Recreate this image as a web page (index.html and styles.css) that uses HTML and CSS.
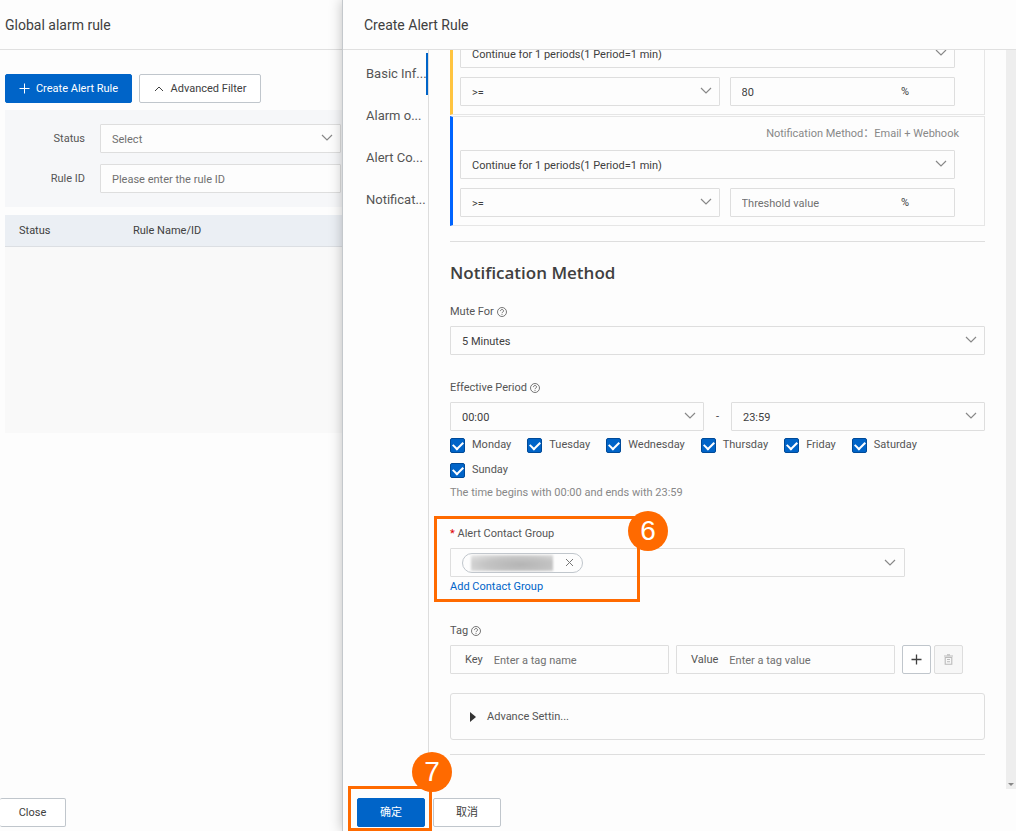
FILE: index.html
```html
<!DOCTYPE html>
<html lang="en">
<head>
    <meta charset="UTF-8">
    <meta name="viewport" content="width=device-width, initial-scale=1.0">
    <title>Create Alert Rule</title>
    <link rel="stylesheet" href="styles.css">
</head>
<body>
    <!-- Shared icons -->
    <svg width="0" height="0" class="sprite" aria-hidden="true">
        <symbol id="chevron" viewBox="0 0 12 7"><path d="M1 1l5 5 5-5" fill="none" stroke="currentColor" stroke-width="1.2"/></symbol>
        <symbol id="help" viewBox="0 0 10 10">
            <circle cx="5" cy="5" r="4.5" fill="none" stroke="currentColor" stroke-width="0.8"/>
            <path d="M3.4 4.1C3.4 2 6.6 2 6.6 4 6.6 5 5 5 5 6.2M5 7v0.9" fill="none" stroke="currentColor" stroke-width="0.8"/>
        </symbol>
    </svg>

    <div class="app">
        <main class="page">
            <header class="page-header"><h1>Global alarm rule</h1></header>
            <div class="page-body">
                <div class="toolbar">
                    <button class="btn btn-primary btn-create" type="button">
                        <svg width="11" height="11" viewBox="0 0 11 11"><path d="M5.5 0.5v10M0.5 5.5h10" stroke="currentColor" fill="none"/></svg>
                        Create Alert Rule
                    </button>
                    <button class="btn btn-filter" type="button">
                        <svg width="10" height="6" viewBox="0 0 10 6"><path d="M1 5l4-4 4 4" fill="none" stroke="currentColor"/></svg>
                        Advanced Filter
                    </button>
                </div>
                <form class="filter">
                    <label for="status">Status</label>
                    <div class="select">
                        <select id="status"><option>Select</option></select>
                        <svg class="chevron"><use href="#chevron"/></svg>
                    </div>
                    <label for="rule-id">Rule ID</label>
                    <div class="field"><input id="rule-id" type="text" placeholder="Please enter the rule ID"></div>
                </form>
                <table class="rules">
                    <thead><tr><th class="col-status">Status</th><th>Rule Name/ID</th></tr></thead>
                    <tbody><tr><td colspan="2"></td></tr></tbody>
                </table>
            </div>
            <footer class="page-footer"><button class="btn btn-close" type="button">Close</button></footer>
        </main>

        <section class="drawer">
            <header class="drawer-header"><h2>Create Alert Rule</h2></header>
            <div class="drawer-body">
                <nav class="steps">
                    <a class="active" href="#basic">Basic Inf...</a>
                    <a href="#alarm">Alarm o...</a>
                    <a href="#contact">Alert Co...</a>
                    <a href="#notification">Notificat...</a>
                </nav>

                <form class="content">
                    <div class="level level-warn">
                        <div class="select">
                            <select aria-label="Periods"><option>Continue for 1 periods(1 Period=1 min)</option></select>
                            <svg class="chevron"><use href="#chevron"/></svg>
                        </div>
                        <div class="condition">
                            <div class="select">
                                <select aria-label="Operator"><option>&gt;=</option></select>
                                <svg class="chevron"><use href="#chevron"/></svg>
                            </div>
                            <div class="field threshold"><input type="text" value="80" aria-label="Threshold"><span>%</span></div>
                        </div>
                    </div>
                    <div class="level level-info">
                        <p class="level-title">Notification Method：Email + Webhook</p>
                        <div class="select">
                            <select aria-label="Periods"><option>Continue for 1 periods(1 Period=1 min)</option></select>
                            <svg class="chevron"><use href="#chevron"/></svg>
                        </div>
                        <div class="condition">
                            <div class="select">
                                <select aria-label="Operator"><option>&gt;=</option></select>
                                <svg class="chevron"><use href="#chevron"/></svg>
                            </div>
                            <div class="field threshold"><input type="text" placeholder="Threshold value" aria-label="Threshold"><span>%</span></div>
                        </div>
                    </div>

                    <section class="notification" id="notification">
                        <h3>Notification Method</h3>

                        <div class="item">
                            <label for="mute">Mute For <svg class="help"><use href="#help"/></svg></label>
                            <div class="select">
                                <select id="mute"><option>5 Minutes</option></select>
                                <svg class="chevron"><use href="#chevron"/></svg>
                            </div>
                        </div>

                        <div class="item">
                            <label for="from">Effective Period <svg class="help"><use href="#help"/></svg></label>
                            <div class="range">
                                <div class="select">
                                    <select id="from"><option>00:00</option></select>
                                    <svg class="chevron"><use href="#chevron"/></svg>
                                </div>
                                <span>-</span>
                                <div class="select">
                                    <select aria-label="To"><option>23:59</option></select>
                                    <svg class="chevron"><use href="#chevron"/></svg>
                                </div>
                            </div>
                            <div class="days">
                                <label><input type="checkbox" checked>Monday</label>
                                <label><input type="checkbox" checked>Tuesday</label>
                                <label><input type="checkbox" checked>Wednesday</label>
                                <label><input type="checkbox" checked>Thursday</label>
                                <label><input type="checkbox" checked>Friday</label>
                                <label><input type="checkbox" checked>Saturday</label>
                                <label><input type="checkbox" checked>Sunday</label>
                            </div>
                            <p class="hint">The time begins with 00:00 and ends with 23:59</p>
                        </div>

                        <div class="item group">
                            <label for="group"><span class="required">*</span> Alert Contact Group</label>
                            <div class="field tags">
                                <span class="tag">
                                    <span class="tag-text"></span>
                                    <button type="button" aria-label="Remove"><svg width="9" height="9" viewBox="0 0 9 9"><path d="M1 1l7 7M8 1l-7 7" stroke="currentColor" fill="none"/></svg></button>
                                </span>
                                <input id="group" type="text">
                                <svg class="chevron"><use href="#chevron"/></svg>
                            </div>
                            <a class="add-group" href="#contact">Add Contact Group</a>
                            <div class="callout callout-group"><span class="badge">6</span></div>
                        </div>

                        <div class="item">
                            <label for="tag-key">Tag <svg class="help"><use href="#help"/></svg></label>
                            <div class="tag-row">
                                <div class="field"><label for="tag-key">Key</label><input id="tag-key" type="text" placeholder="Enter a tag name"></div>
                                <div class="field"><label for="tag-value">Value</label><input id="tag-value" type="text" placeholder="Enter a tag value"></div>
                                <button class="btn btn-icon" type="button" aria-label="Add"><svg width="11" height="11" viewBox="0 0 11 11"><path d="M5.5 0.5v10M0.5 5.5h10" stroke="currentColor" stroke-width="1.3" fill="none"/></svg></button>
                                <button class="btn btn-icon" type="button" aria-label="Delete" disabled><svg width="9" height="11" viewBox="0 0 9 11"><path d="M0 2h9M3 0.8h3M1.2 3.5v6.7h6.6V3.5zM3 5.5h3M3 7.8h3" stroke="currentColor" stroke-width="1.1" fill="none"/></svg></button>
                            </div>
                        </div>

                        <button class="advance" type="button">
                            <svg width="6" height="10" viewBox="0 0 6 10"><path d="M0 0l6 5-6 5z" fill="currentColor"/></svg>
                            Advance Settin...
                        </button>
                    </section>
                </form>

                <div class="scrollbar"><svg width="6" height="3" viewBox="0 0 6 3"><path d="M0 0h6L3 3z" fill="currentColor"/></svg></div>
            </div>
            <footer class="drawer-footer">
                <div class="confirm">
                    <button class="btn btn-primary" type="button">确定</button>
                    <div class="callout callout-confirm"><span class="badge">7</span></div>
                </div>
                <button class="btn" type="button">取消</button>
            </footer>
        </section>
    </div>
</body>
</html>
```
FILE: styles.css
```css
* {
    box-sizing: border-box;
}

body {
    margin: 0;
    font-family: Roboto, "Noto Sans CJK SC", sans-serif;
    font-size: 11px;
    line-height: 16px;
    color: #404040;
    background: #fdfdfd;
}

h1, h2, h3, p {
    margin: 0;
}

input, select, button {
    font: inherit;
    color: inherit;
}

a {
    color: #0064c8;
    text-decoration: none;
}

.sprite {
    position: absolute;
}

.app {
    display: flex;
    height: 100vh;
    overflow: hidden;
}

/* Buttons */
.btn {
    display: inline-flex;
    align-items: center;
    justify-content: center;
    height: 29px;
    padding: 0 22px;
    border: 1px solid #c0c6cc;
    border-radius: 2px;
    background: #fff;
}

.btn-primary {
    border-color: #0064c8;
    background: #0064c8;
    color: #fff;
}

.btn-create {
    gap: 6px;
    width: 127px;
    padding: 0;
}

.btn-filter {
    gap: 7px;
    width: 122px;
    padding: 0;
}

.btn-icon {
    width: 29px;
    padding: 0;
}

.btn-icon:disabled {
    border-color: #ddd;
    background: #f7f7f7;
    color: #bbb;
}

/* Inputs and drop-downs */
.select {
    position: relative;
}

.select select,
.field {
    width: 100%;
    height: 29px;
    border: 1px solid #dedede;
    border-radius: 1px;
    background: #fdfdfd;
}

.select select {
    display: block;
    padding: 2px 30px 0 11px;
    appearance: none;
}

.chevron {
    position: absolute;
    top: 10px;
    right: 8px;
    width: 12px;
    height: 7px;
    color: #888;
    pointer-events: none;
}

.field {
    display: flex;
    align-items: center;
    padding: 0 11px;
}

.field input {
    flex: 1;
    min-width: 0;
    padding: 2px 0 0;
    border: 0;
    outline: 0;
    background: none;
}

::placeholder {
    color: #707070;
    opacity: 1;
}

/* Rule list */
.page {
    display: flex;
    flex: 0 0 342px;
    flex-direction: column;
}

.page-header,
.drawer-header {
    display: flex;
    flex: none;
    align-items: center;
    height: 50px;
    padding-left: 5px;
    border-bottom: 1px solid #e0e0e0;
}

h1, h2 {
    font-size: 14px;
    font-weight: 400;
}

.page-body {
    flex: 1;
    padding: 24px 0 0 5px;
}

.toolbar {
    display: flex;
    gap: 7px;
}

.filter {
    display: grid;
    grid-template-columns: 80px 1fr;
    gap: 11px 15px;
    align-items: center;
    margin-top: 7px;
    padding: 14px 1px 14px 0;
    background: #f6f7f9;
}

.filter label {
    text-align: right;
    color: #555;
}

.filter select {
    color: #707070;
}

.rules {
    width: 100%;
    margin-top: 8px;
    border-collapse: collapse;
}

.rules th {
    height: 31px;
    padding: 1px 14px 0;
    border-bottom: 1px solid #dcdfe3;
    background: #ebeff4;
    font-weight: 400;
    text-align: left;
}

.rules .col-status {
    width: 114px;
}

.rules td {
    height: 187px;
    background: #f9f9f9;
}

.page-footer {
    padding-bottom: 4px;
}

.btn-close {
    width: 66px;
    border-left: 0;
}

/* Drawer */
.drawer {
    position: relative;
    display: flex;
    flex: 1;
    flex-direction: column;
    min-width: 0;
    border-left: 1px solid #c4c8cc;
    background: #fdfdfd;
    box-shadow: 0 0 12px rgba(0, 0, 0, 0.25);
}

.drawer-header {
    padding-left: 21px;
}

.drawer-body {
    display: flex;
    flex: 1;
    min-height: 0;
}

.steps {
    flex: 0 0 86px;
    min-width: 0;
    padding-top: 3px;
    border-right: 1px solid #ddd;
}

.steps a {
    display: block;
    height: 42px;
    padding-left: 23px;
    border-right: 2px solid transparent;
    font-size: 13px;
    line-height: 42px;
    color: #555;
    white-space: nowrap;
}

.steps .active {
    border-color: #0064c8;
}

.content {
    flex: 1;
    min-width: 0;
    padding: 0 21px;
    overflow: hidden;
}

/* Alert levels, first one is scrolled under the header */
.level {
    margin-bottom: 1px;
    padding: 0 29px 8px 7px;
    border: 1px solid #e6e6e6;
    border-left: 3px solid #0064ff;
}

.level-warn {
    margin-top: -12px;
    border-left-color: #ffc440;
}

.level-title {
    padding: 9px 0 8px;
    margin-right: -4px;
    text-align: right;
    color: #888;
}

.condition {
    display: grid;
    grid-template-columns: 259fr 225fr;
    gap: 10px;
    margin-top: 9px;
}

.threshold span {
    padding-right: 34px;
}

.notification {
    margin-top: 15px;
    padding-bottom: 14px;
    border-top: 1px solid #dedede;
    border-bottom: 1px solid #dedede;
}

h3 {
    padding: 19px 0 18px;
    font-family: "Open Sans", sans-serif;
    font-size: 17px;
    font-weight: 600;
    line-height: 24px;
}

.item {
    margin-bottom: 24px;
}

.item > label {
    display: block;
    height: 23px;
    padding-top: 1px;
    color: #555;
}

.help {
    width: 10px;
    height: 10px;
    vertical-align: -2px;
}

.range {
    display: flex;
    align-items: center;
}

.range .select {
    flex: 1;
}

.range span {
    width: 27px;
    text-align: center;
}

.days {
    display: flex;
    flex-wrap: wrap;
    gap: 9px 16px;
    margin-top: 6px;
}

.days label {
    display: flex;
    align-items: center;
    gap: 7px;
    color: #555;
}

.days input {
    width: 15px;
    height: 15px;
    margin: 0;
    border: 1px solid #004a98;
    border-radius: 2px;
    background: #0064c8;
    appearance: none;
}

.days input::before {
    content: "";
    display: block;
    width: 8px;
    height: 5px;
    margin: 2px 0 0 2px;
    border: solid #fff;
    border-width: 0 0 2px 2px;
    transform: rotate(-45deg);
}

.hint {
    margin-top: 7px;
    color: #888;
}

.group {
    position: relative;
}

.required {
    color: #d00;
}

.tags {
    position: relative;
    width: 85%;
}

.tag {
    display: flex;
    align-items: center;
    width: 121px;
    height: 20px;
    margin-right: 8px;
    padding: 0 8px;
    border: 1px solid #c0c6cc;
    border-radius: 10px;
}

.tag-text {
    flex: 1;
    height: 16px;
    background: radial-gradient(ellipse at 60% 60%, #b4b4b4, #c4c4c4 50%, #dcdcdc 85%, #efefef);
    filter: blur(1px);
}

.tag button {
    display: flex;
    margin-left: 12px;
    padding: 0;
    border: 0;
    background: none;
    color: #777;
}

.add-group {
    display: block;
    padding: 2px 0 3px;
}

.tag-row {
    display: flex;
    gap: 7px;
}

.tag-row .field {
    flex: 0 0 219px;
    gap: 11px;
    padding-left: 14px;
}

.tag-row .field label {
    color: #555;
}

.tag-row .btn + .btn {
    margin-left: -4px;
}

.advance {
    display: flex;
    align-items: center;
    gap: 11px;
    width: 100%;
    height: 47px;
    margin-top: -5px;
    padding: 0 19px;
    border: 1px solid #dedede;
    border-radius: 3px;
    background: none;
    color: #555;
}

.advance svg {
    color: #333;
}

.scrollbar {
    display: flex;
    flex: 0 0 10px;
    align-items: flex-end;
    justify-content: center;
    padding-bottom: 3px;
    background: #eee;
    color: #888;
}

.drawer-footer {
    display: flex;
    gap: 8px;
    padding: 9px 14px 4px;
}

.confirm {
    position: relative;
}

/* Numbered highlights over the form */
.callout {
    position: absolute;
    border: 3px solid #ff6a00;
    pointer-events: none;
}

.callout-group {
    top: -9px;
    left: -16px;
    width: 206px;
    height: 86px;
}

.callout-confirm {
    top: -12px;
    left: -9px;
    width: 84px;
    height: 45px;
}

.badge {
    position: absolute;
    top: -8px;
    right: -31px;
    width: 40px;
    height: 40px;
    border-radius: 50%;
    background: #ff6a00;
    color: #fff;
    font-family: "Liberation Sans", Arial, sans-serif;
    font-size: 28px;
    line-height: 40px;
    text-align: center;
}

.callout-confirm .badge {
    top: -37px;
    right: -23px;
}
```
